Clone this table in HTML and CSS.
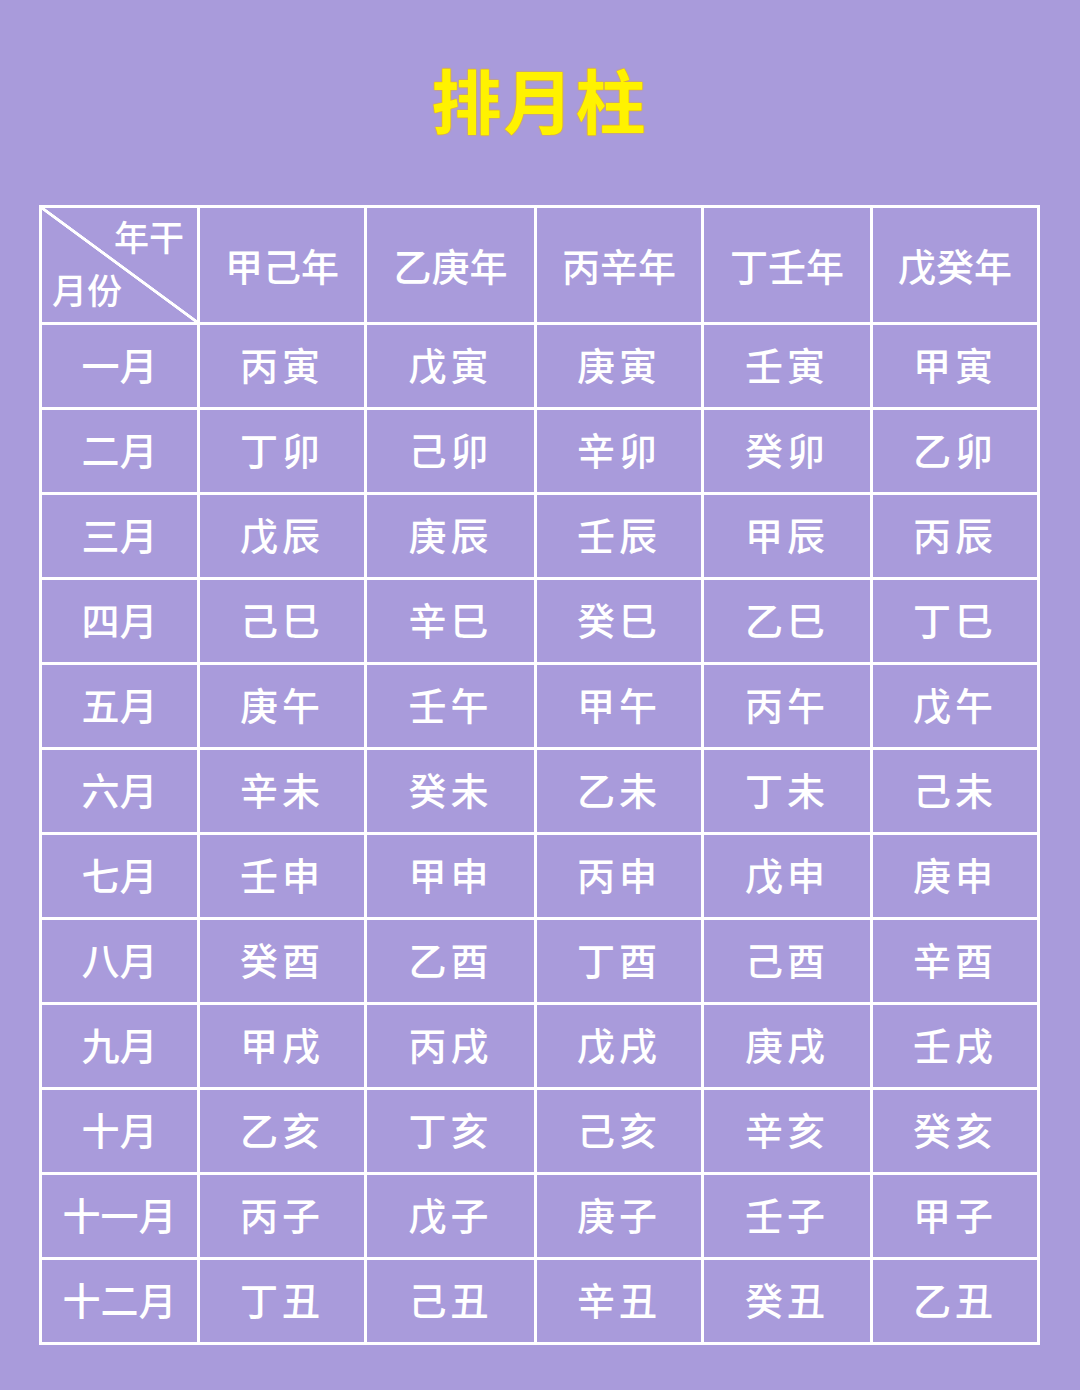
FILE: index.html
```
<!DOCTYPE html>
<html lang="zh">
<head>
<meta charset="utf-8">
<title>排月柱</title>
<link rel="stylesheet" href="styles.css">
</head>
<body>
<div class="page">
  <h1 class="title">排月柱</h1>
  <div class="grid">
    <div class="cell corner"><span class="c-top">年干</span><span class="c-bot">月份</span></div>
    <div class="cell head">甲己年</div>
    <div class="cell head">乙庚年</div>
    <div class="cell head">丙辛年</div>
    <div class="cell head">丁壬年</div>
    <div class="cell head">戊癸年</div>

    <div class="cell month">一月</div><div class="cell">丙寅</div><div class="cell">戊寅</div><div class="cell">庚寅</div><div class="cell">壬寅</div><div class="cell">甲寅</div>
    <div class="cell month">二月</div><div class="cell">丁卯</div><div class="cell">己卯</div><div class="cell">辛卯</div><div class="cell">癸卯</div><div class="cell">乙卯</div>
    <div class="cell month">三月</div><div class="cell">戊辰</div><div class="cell">庚辰</div><div class="cell">壬辰</div><div class="cell">甲辰</div><div class="cell">丙辰</div>
    <div class="cell month">四月</div><div class="cell">己巳</div><div class="cell">辛巳</div><div class="cell">癸巳</div><div class="cell">乙巳</div><div class="cell">丁巳</div>
    <div class="cell month">五月</div><div class="cell">庚午</div><div class="cell">壬午</div><div class="cell">甲午</div><div class="cell">丙午</div><div class="cell">戊午</div>
    <div class="cell month">六月</div><div class="cell">辛未</div><div class="cell">癸未</div><div class="cell">乙未</div><div class="cell">丁未</div><div class="cell">己未</div>
    <div class="cell month">七月</div><div class="cell">壬申</div><div class="cell">甲申</div><div class="cell">丙申</div><div class="cell">戊申</div><div class="cell">庚申</div>
    <div class="cell month">八月</div><div class="cell">癸酉</div><div class="cell">乙酉</div><div class="cell">丁酉</div><div class="cell">己酉</div><div class="cell">辛酉</div>
    <div class="cell month">九月</div><div class="cell">甲戌</div><div class="cell">丙戌</div><div class="cell">戊戌</div><div class="cell">庚戌</div><div class="cell">壬戌</div>
    <div class="cell month">十月</div><div class="cell">乙亥</div><div class="cell">丁亥</div><div class="cell">己亥</div><div class="cell">辛亥</div><div class="cell">癸亥</div>
    <div class="cell month">十一月</div><div class="cell">丙子</div><div class="cell">戊子</div><div class="cell">庚子</div><div class="cell">壬子</div><div class="cell">甲子</div>
    <div class="cell month">十二月</div><div class="cell">丁丑</div><div class="cell">己丑</div><div class="cell">辛丑</div><div class="cell">癸丑</div><div class="cell">乙丑</div>
  </div>
</div>
</body>
</html>
```
FILE: styles.css
```
html, body {
  margin: 0;
  padding: 0;
}
body {
  background: #a99bdb;
  width: 1080px;
  height: 1390px;
  overflow: hidden;
  font-family: "Noto Sans CJK SC", "Noto Sans", sans-serif;
}
.page {
  display: flex;
  flex-direction: column;
  padding-left: 39px;
}
.title {
  margin: 0;
  height: 205px;
  box-sizing: border-box;
  padding-bottom: 8px;
  display: flex;
  align-items: center;
  justify-content: center;
  width: 1001px;
  font-size: 70px;
  font-weight: 700;
  color: #fff200;
  letter-spacing: 2px;
  text-shadow: 0 0 1px #e8a800, 0 0 2px #f0b000;
}
.grid {
  width: 1001px;
  box-sizing: border-box;
  background: #ffffff;
  padding: 3px;
  display: grid;
  gap: 3px;
  grid-template-columns: 155px 164px 167px 164px 166px 164px;
  grid-template-rows: 114px repeat(12, 82px);
}
.cell {
  background: #a99bdb;
  color: #ffffff;
  display: flex;
  align-items: center;
  justify-content: center;
  font-size: 38px;
  font-weight: 500;
  letter-spacing: 4px;
  padding-bottom: 5px;
}
.head {
  letter-spacing: 0;
  padding-bottom: 2px;
}
.month {
  letter-spacing: 0;
}
.corner {
  position: relative;
  display: flex;
  flex-direction: column;
  justify-content: space-between;
  align-items: stretch;
  padding: 9px 13px 14px 10px;
  letter-spacing: 0;
  font-size: 35px;
  line-height: 1.1;
  background: linear-gradient(to top right, #a99bdb calc(50% - 1.8px), #ffffff calc(50% - 1.2px), #ffffff calc(50% + 1.2px), #a99bdb calc(50% + 1.8px));
}
.c-top {
  text-align: right;
}
.c-bot {
  text-align: left;
}
```
